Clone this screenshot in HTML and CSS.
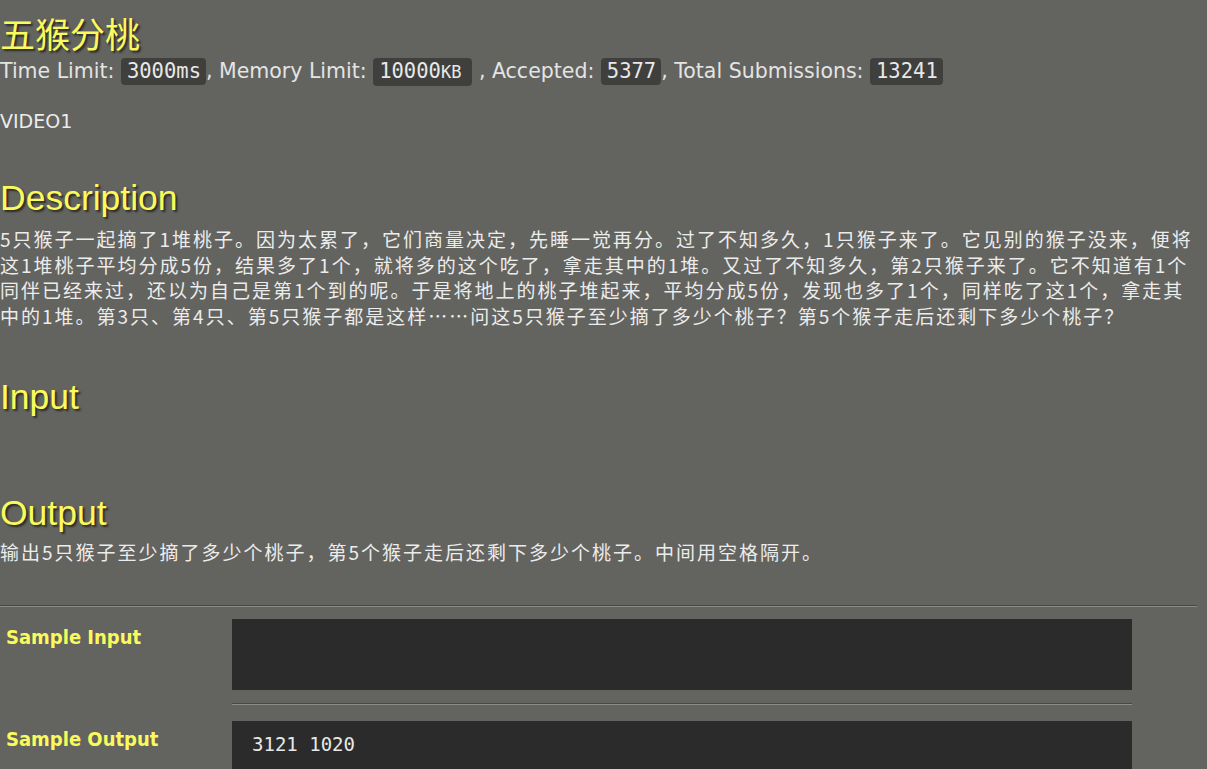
FILE: index.html
```html
<!DOCTYPE html>
<html lang="zh">
<head>
<meta charset="utf-8">
<link rel="stylesheet" href="styles.css">
</head>
<body>
<div class="page">
  <h1 class="title">五猴分桃</h1>
  <div class="info">Time Limit: <span class="badge">3000ms</span>, Memory Limit: <span class="badge">10000<span class="kb">KB</span></span> , Accepted: <span class="badge">5377</span>, Total Submissions: <span class="badge">13241</span></div>
  <div class="video">VIDEO1</div>

  <h2 class="sec">Description</h2>
  <div class="content">5只猴子一起摘了1堆桃子。因为太累了，它们商量决定，先睡一觉再分。过了不知多久，1只猴子来了。它见别的猴子没来，便将这1堆桃子平均分成5份，结果多了1个，就将多的这个吃了，拿走其中的1堆。又过了不知多久，第2只猴子来了。它不知道有1个同伴已经来过，还以为自己是第1个到的呢。于是将地上的桃子堆起来，平均分成5份，发现也多了1个，同样吃了这1个，拿走其中的1堆。第3只、第4只、第5只猴子都是这样……问这5只猴子至少摘了多少个桃子？第5个猴子走后还剩下多少个桃子？</div>

  <h2 class="sec sec-input">Input</h2>
  <div class="content empty"></div>

  <h2 class="sec sec-output">Output</h2>
  <div class="content">输出5只猴子至少摘了多少个桃子，第5个猴子走后还剩下多少个桃子。中间用空格隔开。</div>

  <hr class="rule">

  <div class="samples">
    <div class="label">Sample Input</div>
    <div class="cell">
      <pre class="box box-in"></pre>
      <hr class="rule rule-inner">
    </div>
    <div class="label">Sample Output</div>
    <div class="cell">
      <pre class="box box-out">3121 1020</pre>
    </div>
  </div>
</div>
</body>
</html>
```

FILE: styles.css
```css
html, body {
  margin: 0;
  padding: 0;
  background: #63635f;
}
.page {
  width: 1200px;
  color: #ececec;
  font-family: "DejaVu Sans", "Noto Sans CJK SC", sans-serif;
}
.title {
  margin: 13px 0 0;
  font-weight: normal;
  font-size: 35px;
  line-height: 40px;
  color: #fafa5c;
  font-family: "Noto Sans CJK SC", sans-serif;
  text-shadow: 2px 2px 2px #2a2a28;
}
.info {
  font-size: 20.5px;
  line-height: 36px;
  color: #e4e4e4;
}
.badge {
  display: inline-block;
  background: #3f3f3d;
  border-radius: 4px;
  padding: 0 5px 0 6px;
  line-height: 27px;
  font-family: "DejaVu Sans Mono", monospace;
  font-size: 20.5px;
  color: #e8e8e8;
}
.kb {
  font-size: 17px;
  margin-right: 6px;
}
.video {
  margin-top: 20px;
  font-size: 19px;
  line-height: 24px;
}
.sec {
  margin: 45px 0 8px;
  font-family: "Liberation Sans", Arial, sans-serif;
  font-weight: normal;
  font-size: 35.5px;
  line-height: 40px;
  color: #fafa5c;
  text-shadow: 2px 2px 2px #2a2a28;
}
.sec-input {
  margin-top: 49px;
}
.sec-output {
  margin-top: 76px;
  margin-bottom: 6px;
}
.content {
  font-family: "Noto Sans CJK SC", sans-serif;
  font-size: 19px;
  letter-spacing: 2px;
  line-height: 25.5px;
  color: #ececec;
}
.rule {
  margin: 40px 0 0;
  border: 0;
  height: 0;
  border-top: 1px solid #474744;
  border-bottom: 1px solid #8c8c88;
  width: 1197px;
}
.samples {
  display: grid;
  grid-template-columns: 232px 900px;
  margin-top: 12px;
}
.label {
  padding: 5px 0 0 6px;
  font-family: "DejaVu Sans Condensed", "DejaVu Sans", sans-serif;
  font-stretch: condensed;
  font-weight: bold;
  font-size: 20px;
  line-height: 26px;
  color: #fafa5c;
}
.cell {
  padding-bottom: 16px;
}
.box {
  margin: 0;
  background: #2b2b2b;
  color: #e8e8e8;
  font-family: "DejaVu Sans Mono", monospace;
  font-size: 19px;
  line-height: 24px;
  padding: 11px 20px 12px;
}
.box-in {
  height: 48px;
}
.box-out {
  height: 40px;
}
.rule-inner {
  margin: 13px 0 0;
  width: 900px;
}
```
